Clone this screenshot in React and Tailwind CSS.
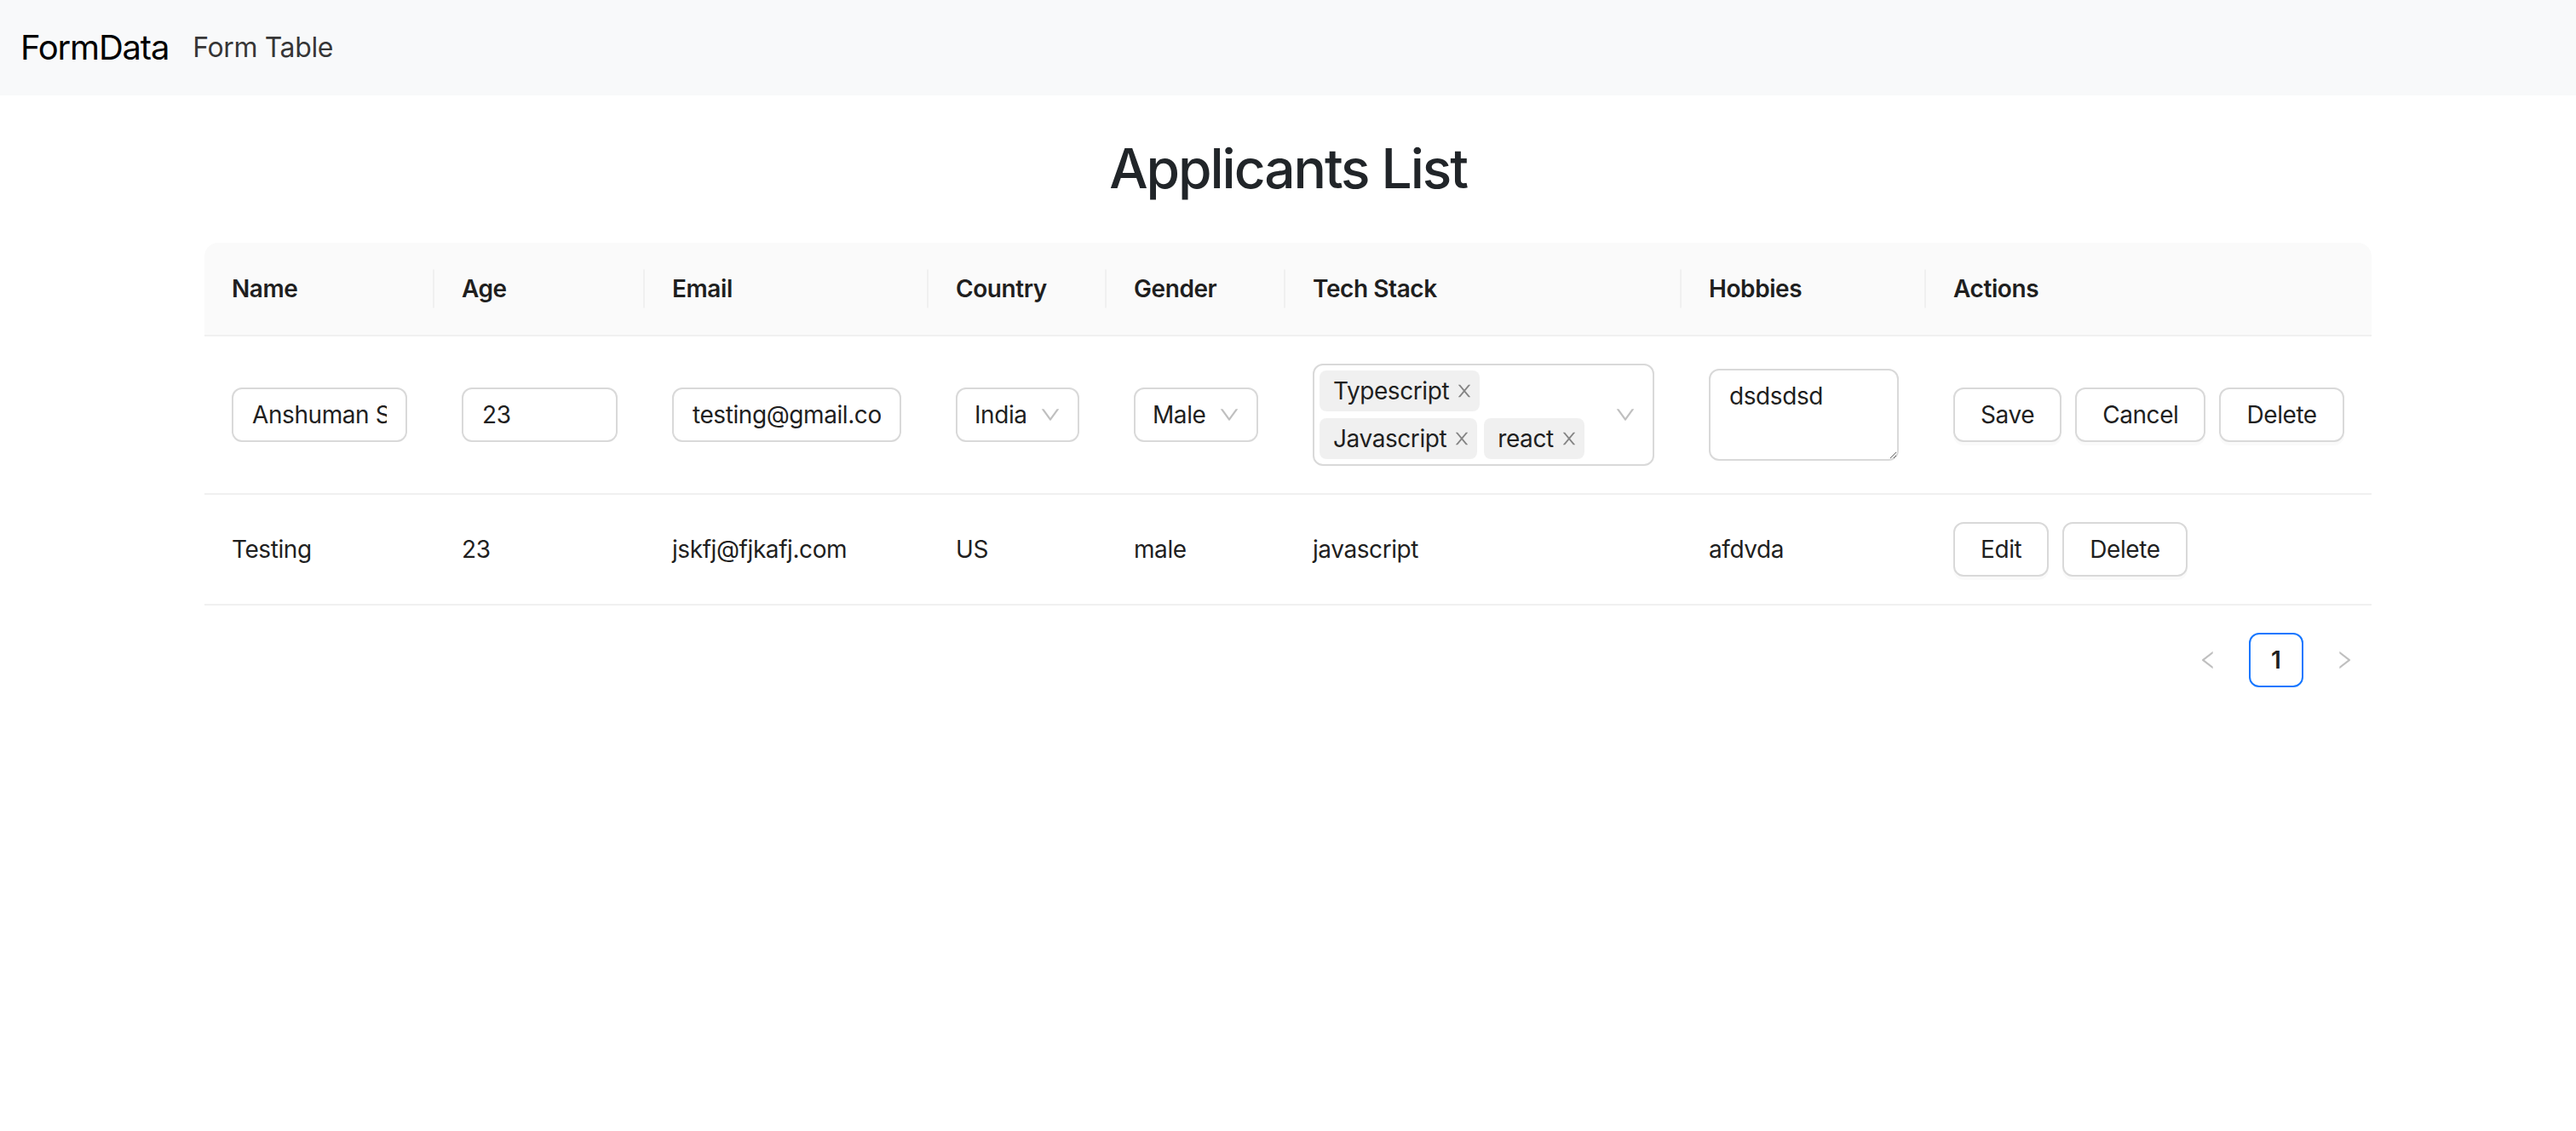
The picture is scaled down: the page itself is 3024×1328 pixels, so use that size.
import React from "react";

function DownIcon({ className }) {
    return (
        <svg viewBox="64 64 896 896" className={className} fill="currentColor">
            <path d="M884 256h-75c-5.1 0-9.9 2.5-12.9 7L512 654.2 227.9 263c-3-4.5-7.8-7-12.9-7H140c-6.5 0-10.3 7.4-6.5 12.7l352.6 486.1c12.8 17.6 39 17.6 51.7 0l352.6-486.1c3.9-5.3.1-12.7-6.4-12.7z" />
        </svg>
    );
}

function CloseIcon({ className }) {
    return (
        <svg viewBox="64 64 896 896" className={className} fill="currentColor" fillRule="evenodd">
            <path d="M563.8 512l262.5-312.9c4.4-5.2.7-13.1-6.1-13.1h-79.8c-4.7 0-9.2 2.1-12.3 5.7L511.6 449.8 295.1 191.7c-3-3.6-7.5-5.7-12.3-5.7H203c-6.8 0-10.5 7.9-6.1 13.1L459.4 512 196.9 824.9A7.95 7.95 0 00203 838h79.8c4.7 0 9.2-2.1 12.3-5.7l216.5-258.1 216.5 258.1c3 3.6 7.5 5.7 12.3 5.7h79.8c6.8 0 10.5-7.9 6.1-13.1L563.8 512z" />
        </svg>
    );
}

function LeftIcon({ className }) {
    return (
        <svg viewBox="64 64 896 896" className={className} fill="currentColor">
            <path d="M724 218.3V141c0-6.7-7.7-10.4-12.9-6.3L260.3 486.8a31.86 31.86 0 000 50.3l450.8 352.1c5.3 4.1 12.9.4 12.9-6.3v-77.3c0-4.9-2.3-9.6-6.1-12.6l-360-281 360-281.1c3.8-3 6.1-7.7 6.1-12.6z" />
        </svg>
    );
}

function RightIcon({ className }) {
    return (
        <svg viewBox="64 64 896 896" className={className} fill="currentColor">
            <path d="M765.7 486.8L314.9 134.7A7.97 7.97 0 00302 141v77.3c0 4.9 2.3 9.6 6.1 12.6l360 281.1-360 281.1c-3.9 3-6.1 7.7-6.1 12.6V883c0 6.7 7.7 10.4 12.9 6.3l450.8-352.1a31.96 31.96 0 000-50.4z" />
        </svg>
    );
}

function Separator() {
    return (
        <span className="absolute right-0 top-1/2 h-[45px] w-[2px] -translate-y-1/2 bg-[#f0f0f0]" />
    );
}

function Button({ children }) {
    return (
        <button
            type="button"
            className="h-[64px] rounded-[12px] border-2 border-[#d9d9d9] bg-white px-[30px] text-[28px] leading-[44px] tracking-[-0.015em] text-[#1f1f1f] shadow-[0_4px_0_rgba(0,0,0,0.02)]"
        >
            {children}
        </button>
    );
}

function TextInput({ value }) {
    return (
        <input
            defaultValue={value}
            className="block h-[64px] w-full rounded-[12px] border-2 border-[#d9d9d9] bg-white px-[22px] text-[28px] tracking-[-0.015em] text-[#1f1f1f] outline-none"
        />
    );
}

function SingleSelect({ value }) {
    return (
        <div className="flex h-[64px] w-full items-center justify-between rounded-[12px] border-2 border-[#d9d9d9] bg-white px-[20px]">
            <span>{value}</span>
            <DownIcon className="h-6 w-6 text-black/25" />
        </div>
    );
}

function Tag({ label }) {
    return (
        <span className="my-1 mr-2 flex h-[48px] items-center rounded-[8px] bg-black/[0.06] pl-4 pr-2 leading-[44px]">
            {label}
            <CloseIcon className="ml-2 h-5 w-5 text-black/45" />
        </span>
    );
}

export default function App() {
    const th = "relative border-b-2 border-[#f0f0f0] bg-[#fafafa] px-8 py-8 text-left font-semibold";
    const td = "border-b-2 border-[#f0f0f0] px-8 py-8 align-middle";

    return (
        <div className="min-h-screen bg-white font-['Inter',sans-serif] text-[#1f1f1f]">
            <nav className="flex h-[112px] items-center bg-[#f8f9fa] px-6">
                <span className="mr-7 text-[40px] leading-[1.5] tracking-[-0.03em] text-black">FormData</span>
                <span className="text-[32px] leading-[1.5] tracking-[-0.012em] text-black/80">Form Table</span>
            </nav>

            <h2 className="my-12 text-center text-[64px] font-medium leading-[1.2] tracking-[-0.032em] text-[#212529]">
                Applicants List
            </h2>

            <div className="mx-auto w-[2544px]">
                <table className="w-full table-fixed border-separate border-spacing-0 text-[28px] leading-[44px] tracking-[-0.015em]">
                    <thead>
                        <tr>
                            <th className={`${th} w-[270px] rounded-tl-[16px]`}>
                                Name
                                <Separator />
                            </th>
                            <th className={`${th} w-[247px]`}>
                                Age
                                <Separator />
                            </th>
                            <th className={`${th} w-[333px]`}>
                                Email
                                <Separator />
                            </th>
                            <th className={`${th} w-[209px]`}>
                                Country
                                <Separator />
                            </th>
                            <th className={`${th} w-[210px]`}>
                                Gender
                                <Separator />
                            </th>
                            <th className={`${th} w-[465px]`}>
                                Tech Stack
                                <Separator />
                            </th>
                            <th className={`${th} w-[287px]`}>
                                Hobbies
                                <Separator />
                            </th>
                            <th className={`${th} w-[523px] rounded-tr-[16px]`}>Actions</th>
                        </tr>
                    </thead>
                    <tbody>
                        <tr>
                            <td className={td}>
                                <TextInput value="Anshuman Singh" />
                            </td>
                            <td className={td}>
                                <TextInput value="23" />
                            </td>
                            <td className={td}>
                                <TextInput value="testing@gmail.com" />
                            </td>
                            <td className={td}>
                                <SingleSelect value="India" />
                            </td>
                            <td className={td}>
                                <SingleSelect value="Male" />
                            </td>
                            <td className={td}>
                                <div className="relative w-full rounded-[12px] border-2 border-[#d9d9d9] bg-white py-[2px] pl-[6px] pr-[46px]">
                                    <div className="flex flex-wrap">
                                        <Tag label="Typescript" />
                                        <Tag label="Javascript" />
                                        <Tag label="react" />
                                    </div>
                                    <DownIcon className="absolute right-[20px] top-1/2 h-6 w-6 -translate-y-1/2 text-black/25" />
                                </div>
                            </td>
                            <td className={td}>
                                <textarea
                                    defaultValue="dsdsdsd"
                                    rows={2}
                                    className="block h-[108px] w-full rounded-[12px] border-2 border-[#d9d9d9] bg-white px-[22px] py-[8px] text-[28px] leading-[44px] tracking-[-0.015em] text-[#1f1f1f] outline-none"
                                />
                            </td>
                            <td className={td}>
                                <div className="flex gap-4">
                                    <Button>Save</Button>
                                    <Button>Cancel</Button>
                                    <Button>Delete</Button>
                                </div>
                            </td>
                        </tr>
                        <tr>
                            <td className={td}>Testing</td>
                            <td className={td}>23</td>
                            <td className={td}>jskfj@fjkafj.com</td>
                            <td className={td}>US</td>
                            <td className={td}>male</td>
                            <td className={td}>javascript</td>
                            <td className={td}>afdvda</td>
                            <td className={td}>
                                <div className="flex gap-4">
                                    <Button>Edit</Button>
                                    <Button>Delete</Button>
                                </div>
                            </td>
                        </tr>
                    </tbody>
                </table>

                <div className="mt-8 flex justify-end gap-4">
                    <span className="flex h-16 w-16 items-center justify-center text-black/25">
                        <LeftIcon className="h-6 w-6" />
                    </span>
                    <span className="flex h-16 w-16 items-center justify-center rounded-[12px] border-2 border-[#1677ff] bg-white text-[28px] font-semibold text-[#1f1f1f]">
                        1
                    </span>
                    <span className="flex h-16 w-16 items-center justify-center text-black/25">
                        <RightIcon className="h-6 w-6" />
                    </span>
                </div>
            </div>
        </div>
    );
}
